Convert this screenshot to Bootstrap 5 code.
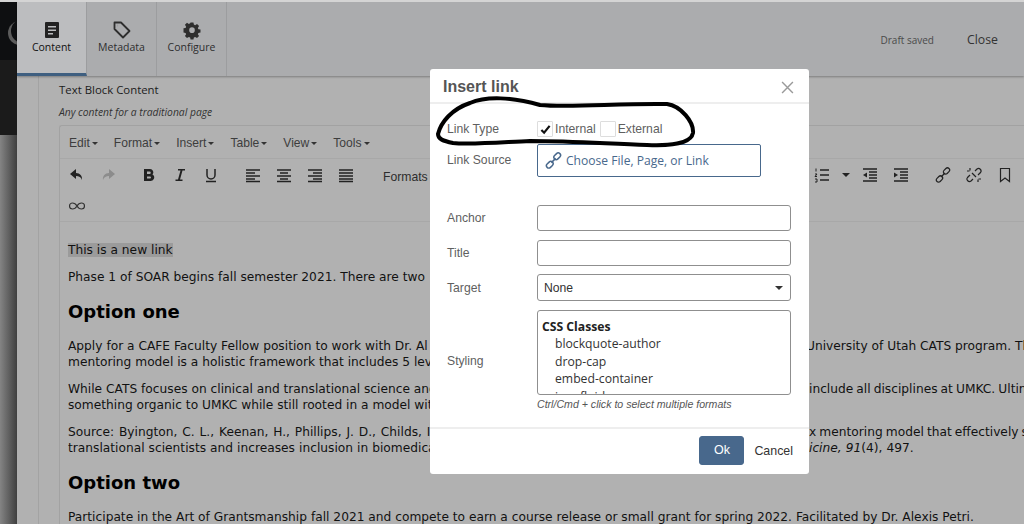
<!DOCTYPE html>
<html lang="en">
<head>
  <meta charset="UTF-8">
  <meta name="viewport" content="width=device-width, initial-scale=1.0">
  <title>Insert link</title>
  <link href="https://cdn.jsdelivr.net/npm/bootstrap@5.3.0/dist/css/bootstrap.min.css" rel="stylesheet">
  <style>
    html, body { height: 100%; }
    body { background: #b1b1b1; overflow: hidden; font-family: "Open Sans", sans-serif; color: #111; }
    .page-wrap { width: 1024px; height: 524px; border-top: 2px solid #d4d4d4; overflow: hidden; position: relative; }
    .side-strip { width: 17px; flex: none; background: linear-gradient(90deg, #848484, #3f3f3f); }
    .side-logo { height: 58px; background: #0e0f11; overflow: hidden; }
    .side-dark { height: 75px; background: #1b1b1b; }
    .main-pane { width: 1007px; flex: none; }
    .top-tabs { height: 74px; background: #abacae; box-shadow: 0 1px 2px rgba(0,0,0,.3); position: relative; }
    .tab-item { width: 70px; color: #2e2e2e; font-size: 10.5px; border-right: 1px solid #9c9d9f; padding-top: 18px; }
    .tab-item svg { display: block; margin: 0 auto; height: 20px; }
    .tab-on { background: #bcbdbf; border-bottom: 3px solid #3f5f80; color: #111; }
    .draft-note { font-size: 10px; color: #4a4a4a; margin: 3px 33px 0 0; }
    .close-link { font-size: 12.3px; color: #333; margin: 3px 26px 0 0; }
    .body-pane { padding-left: 21px; }
    .inner-pane { border-left: 1px solid #a3a3a3; padding: 6px 0 0 20px; }
    .field-name { font-size: 11.4px; line-height: 16px; color: #1c1c1c; }
    .field-help { font-size: 10.3px; font-style: italic; line-height: 14px; margin: 7px 0 6px; color: #333; }
    .editor-box { border: 1px solid #a2a2a2; border-right: 0; border-radius: 3px 0 0 0; }
    .menu-row { height: 33px; border-bottom: 1px solid #a8a8a8; padding: 1px 0 0 9px; gap: 16px; font: 12.1px "Liberation Sans", sans-serif; color: #3d3d3d; }
    .menu-row span::after, .formats-lbl::after { content: ""; display: inline-block; border: 3px solid transparent; border-top-color: #333; border-bottom: 0; margin-left: 2px; vertical-align: 2px; }
    .tool-rows { height: 63px; border-bottom: 1px solid #a8a8a8; position: relative; }
    .tool-row { height: 31px; padding-left: 1px; }
    .tool-btn { width: 31px; height: 31px; flex: none; }
    .tool-btn svg { width: 16px; height: 16px; }
    .tool-sep { width: 10px; flex: none; }
    .tool-sep-a { width: 11px; flex: none; }
    .tool-sep-b { width: 22px; flex: none; }
    .tool-sep-c { width: 11px; flex: none; }
    .num-caret { width: 17px; flex: none; }
    .formats-lbl { font: 12.2px "Liberation Sans", sans-serif; color: #2d2d2d; width: 423px; flex: none; padding-top: 5px; white-space: nowrap; overflow: hidden; }
    .edit-body { font: 12.22px/16px "DejaVu Sans", sans-serif; color: #111; padding: 20px 0 0 8px; white-space: nowrap; overflow: hidden; }
    .edit-body p { margin: 0 0 11px; }
    .edit-body h2 { font: bold 18px/22px "DejaVu Sans", sans-serif; margin: 16px 0 15px; color: #000; }
    .sel-text { background: #9b9b9b; }
    .split-line { display: flex; }
    .split-left { width: 741px; flex: none; overflow: hidden; }
    .nudge-back { margin-left: -3px; }
    .just-wide { word-spacing: 1px; }
    .just-some { word-spacing: .15px; }
    .just-tight { word-spacing: -.8px; }
    .insert-dlg { position: absolute; left: 430px; top: 67px; width: 379px; height: 405px; background: #fff; border-radius: 3px; font: 12.2px "Liberation Sans", sans-serif; color: #5f5f5f; }
    .dlg-head { height: 35px; border-bottom: 2px solid #eee; padding: 3px 15px 0 13px; }
    .dlg-title { font-size: 16px; font-weight: 700; color: #555; }
    .dlg-x { width: 13px; height: 13px; }
    .dlg-form { padding: 0 18px 0 17px; }
    .dlg-row { display: flex; align-items: center; }
    .dlg-gap { margin-bottom: 9px; }
    .type-row { height: 40px; padding-top: 10px; }
    .source-row { height: 61px; }
    .source-row .dlg-lbl { padding-top: 9px; }
    .dlg-lbl { width: 90px; flex: none; }
    .style-lbl { padding-top: 16px; }
    .dlg-input.form-control, .dlg-input.form-select { height: 26px; min-height: 0; padding: 0 6px; border: 1px solid #8f8f8f; border-radius: 3px; font: 12.2px "Liberation Sans", sans-serif; color: #333; }
    .dlg-input.form-select { height: 27px; background-image: url("data:image/svg+xml,%3csvg xmlns='http://www.w3.org/2000/svg' viewBox='0 0 8 4'%3e%3cpath d='M0 0h8L4 4z' fill='%23333'/%3e%3c/svg%3e"); background-size: 8px 4px; background-position: right 7px center; }
    .chk-box { width: 16px; height: 16px; border: 1px solid #ddd; border-radius: 1px; margin-right: 2px; flex: none; }
    .chk-next { margin-left: 4px; margin-right: 2px; }
    .src-btn { width: 224px; height: 33px; border: 1px solid #48688c; border-radius: 2px; color: #48688c; font: 12.1px "Open Sans", sans-serif; padding-left: 7px; background: #fff; }
    .style-box { height: 85px; width: 254px; border: 1px solid #8f8f8f; border-radius: 3px; overflow: hidden; font: 12.2px/17.4px "Open Sans", sans-serif; color: #333; padding: 7px 4px; }
    .style-box div { padding-left: 13px; }
    .style-box .style-head { font-weight: 700; padding-left: 0; color: #222; }
    .style-note { font-size: 10.6px; font-style: italic; margin: 2px 0 0 90px; line-height: 14px; color: #555; }
    .dlg-foot { position: absolute; left: 0; right: 0; bottom: 0; height: 47px; border-top: 2px solid #eee; padding: 0 16px 2px 0; }
    .ok-btn.btn { background: #48688c; border: 1px solid #48688c; color: #fff; width: 45px; height: 29px; padding: 0; font-size: 12.5px; border-radius: 3px; }
    .cancel-lnk { font-size: 12.4px; color: #333; margin-left: 10px; }
    .ink-mark { position: absolute; left: 0; top: 0; pointer-events: none; }
  </style>
</head>
<body>
  <div class="page-wrap d-flex">
    <div class="side-strip">
      <div class="side-logo"><svg width="17" height="58"><circle cx="20" cy="31" r="12" fill="#5c5c5c"/><circle cx="23" cy="29" r="12" fill="#0e0f11"/></svg></div>
      <div class="side-dark"></div>
    </div>
    <div class="main-pane">
      <div class="top-tabs d-flex align-items-center">
        <div class="tab-item tab-on h-100 text-center">
          <svg viewBox="0 0 16 20" width="16"><path fill="#222" fill-rule="evenodd" d="M2 2h12a1 1 0 0 1 1 1v14a1 1 0 0 1-1 1H2a1 1 0 0 1-1-1V3a1 1 0 0 1 1-1zM4 6v1.500h8V6zM4 9.500V11h8V9.500zM4 13v1.500h5V13z"/></svg>
          Content
        </div>
        <div class="tab-item h-100 text-center">
          <svg viewBox="0 0 20 20" width="20"><path fill="none" stroke="#2e2e2e" stroke-width="1.800" stroke-linejoin="round" d="M2.500 2.500h6.500l8.500 8.500-6.500 6.500L2.500 9zM5.500 5.500h.1"/></svg>
          Metadata
        </div>
        <div class="tab-item h-100 text-center">
          <svg viewBox="0 0 20 20" width="20"><path fill="#2e2e2e" fill-rule="evenodd" d="M8.300 1.500h3.400l.5 2.500 1.500.7 2.200-1.400 2.400 2.400-1.400 2.200.6 1.500 2.500.5v3.400l-2.500.5-.6 1.500 1.400 2.200-2.400 2.400-2.200-1.400-1.500.6-.5 2.400H8.300l-.5-2.400-1.500-.6-2.200 1.400-2.400-2.400 1.400-2.200-.7-1.500-2.400-.5V8.400l2.400-.5.7-1.500L1.700 4.200 4.100 1.800l2.200 1.400 1.500-.7zM10 7.200a3.300 3.300 0 1 0 0 6.600 3.300 3.300 0 0 0 0-6.600z" transform="translate(1.500 1.200) scale(.85)"/></svg>
          Configure
        </div>
        <span class="draft-note ms-auto">Draft saved</span>
        <span class="close-link">Close</span>
      </div>
      <div class="body-pane">
        <div class="inner-pane">
          <div class="field-name">Text Block Content</div>
          <div class="field-help">Any content for a traditional page</div>
          <div class="editor-box">
            <div class="menu-row d-flex align-items-center">
              <span>Edit</span><span>Format</span><span>Insert</span><span>Table</span><span>View</span><span>Tools</span>
            </div>
            <div class="tool-rows">
              <div class="tool-row d-flex align-items-center">
                <div class="tool-btn d-flex align-items-center justify-content-center"><svg viewBox="0 0 16 16"><path fill="#222" d="M7 2 1 7l6 5V9c3 0 5 1 6 4 .5-4-2-7-6-7z"/></svg></div>
                <div class="tool-btn d-flex align-items-center justify-content-center"><svg viewBox="0 0 16 16"><path fill="#8c8c8c" d="m9 2 6 5-6 5V9c-3 0-5 1-6 4-.5-4 2-7 6-7z"/></svg></div>
                <div class="tool-sep"></div>
                <div class="tool-btn d-flex align-items-center justify-content-center"><svg viewBox="0 0 16 16"><path fill="#222" fill-rule="evenodd" d="M3 2h6a3.300 3.300 0 0 1 2.500 5.500A3.500 3.500 0 0 1 9.500 14H3zm3 2.500V7h2.500a1.250 1.250 0 0 0 0-2.500zm0 5v2h3a1 1 0 0 0 0-2z"/></svg></div>
                <div class="tool-btn d-flex align-items-center justify-content-center"><svg viewBox="0 0 16 16"><path fill="#222" d="M6 2h7v1.500h-2.500L8 12.500h2.500V14h-7v-1.500H6l2.500-9H6z"/></svg></div>
                <div class="tool-btn d-flex align-items-center justify-content-center"><svg viewBox="0 0 16 16"><path fill="none" stroke="#222" stroke-width="1.500" d="M4 2v6a4 4 0 0 0 8 0V2M3 14.500h10"/></svg></div>
                <div class="tool-sep-a"></div>
                <div class="tool-btn d-flex align-items-center justify-content-center"><svg viewBox="0 0 16 16"><path stroke="#222" stroke-width="1.400" d="M1 3h14M1 6h9M1 9h14M1 12h9M1 14.500h14"/></svg></div>
                <div class="tool-btn d-flex align-items-center justify-content-center"><svg viewBox="0 0 16 16"><path stroke="#222" stroke-width="1.400" d="M1 3h14M4 6h8M1 9h14M4 12h8M1 14.500h14"/></svg></div>
                <div class="tool-btn d-flex align-items-center justify-content-center"><svg viewBox="0 0 16 16"><path stroke="#222" stroke-width="1.400" d="M1 3h14M6 6h9M1 9h14M6 12h9M1 14.500h14"/></svg></div>
                <div class="tool-btn d-flex align-items-center justify-content-center"><svg viewBox="0 0 16 16"><path stroke="#222" stroke-width="1.400" d="M1 3h14M1 6h14M1 9h14M1 12h14M1 14.500h14"/></svg></div>
                <div class="tool-sep-b"></div>
                <div class="formats-lbl">Formats</div>
                <div class="tool-btn d-flex align-items-center justify-content-center"><svg viewBox="0 0 16 16"><path stroke="#222" stroke-width="1.500" d="M6 3h9M6 8h9M6 13h9"/><path stroke="#222" fill="none" d="M2 1.500v3M1 7h2l-2 2.500h2M1 12h2v3H1"/></svg></div>
                <div class="num-caret d-flex align-items-center justify-content-center"><svg viewBox="0 0 8 4" width="8" height="4"><path fill="#222" d="M0 0h8L4 4z"/></svg></div>
                <div class="tool-btn d-flex align-items-center justify-content-center"><svg viewBox="0 0 16 16"><path stroke="#222" stroke-width="1.400" d="M1 2h14M7 5h8M7 8h8M7 11h8M1 14h14"/><path fill="#222" d="M5 5.500v5L1 8z"/></svg></div>
                <div class="tool-btn d-flex align-items-center justify-content-center"><svg viewBox="0 0 16 16"><path stroke="#222" stroke-width="1.400" d="M1 2h14M7 5h8M7 8h8M7 11h8M1 14h14"/><path fill="#222" d="M1 5.500v5L5 8z"/></svg></div>
                <div class="tool-sep-c"></div>
                <div class="tool-btn d-flex align-items-center justify-content-center"><svg viewBox="0 0 16 16"><g fill="none" stroke="#222" stroke-width="1.200"><rect x="8" y="1.800" width="7" height="4.400" rx="2.200" transform="rotate(-45 11.500 4)"/><rect x="1" y="9.800" width="7" height="4.400" rx="2.200" transform="rotate(-45 4.500 12)"/><path d="m6 10 4-4"/></g></svg></div>
                <div class="tool-btn d-flex align-items-center justify-content-center"><svg viewBox="0 0 16 16"><g fill="none" stroke="#222" stroke-width="1.200"><path d="M9 4l2-2a2.500 2.500 0 0 1 3.500 3.500L12 8M7 12l-2 2a2.500 2.500 0 0 1-3.500-3.500L4 8M6 6l4 4"/><path d="M4 1v2.500M1 4h2.500M12 15v-2.500M15 12h-2.500"/></g></svg></div>
                <div class="tool-btn d-flex align-items-center justify-content-center"><svg viewBox="0 0 16 16"><path fill="none" stroke="#222" stroke-width="1.200" d="M3.500 1.500h9v13L8 11l-4.500 3.500z"/></svg></div>
              </div>
              <div class="tool-row d-flex align-items-center">
                <div class="tool-btn d-flex align-items-center justify-content-center"><svg viewBox="0 0 16 16"><path fill="none" stroke="#333" stroke-width="1.200" d="M8 8C6.500 5.500 5 5 3.500 5a3 3 0 0 0 0 6C5 11 6.500 10.500 8 8s3-3 4.500-3a3 3 0 0 1 0 6C11 11 9.500 10.500 8 8z"/></svg></div>
              </div>
            </div>
            <div class="edit-body">
              <p><span class="sel-text">This is a new link</span></p>
              <p>Phase 1 of SOAR begins fall semester 2021. There are two</p>
              <h2>Option one</h2>
              <p>
                <span class="split-line"><span class="split-left">Apply for a CAFE Faculty Fellow position to work with Dr. Al</span><span class="nudge-back">University of Utah CATS program. Th</span></span>
                <span class="split-line">mentoring model is a holistic framework that includes 5 lev</span>
              </p>
              <p>
                <span class="split-line"><span class="split-left">While CATS focuses on clinical and translational science and</span><span class="just-tight">include all disciplines at UMKC. Ultin</span></span>
                <span class="split-line">something organic to UMKC while still rooted in a model wit</span>
              </p>
              <p>
                <span class="split-line"><span class="split-left just-wide">Source: Byington, C. L., Keenan, H., Phillips, J. D., Childs, I</span><span class="just-tight">x mentoring model that effectively s</span></span>
                <span class="split-line just-some"><span class="split-left">translational scientists and increases inclusion in biomedica</span><span><em>icine, 91</em>(4), 497.</span></span>
              </p>
              <h2>Option two</h2>
              <p>Participate in the Art of Grantsmanship fall 2021 and compete to earn a course release or small grant for spring 2022. Facilitated by Dr. Alexis Petri.</p>
            </div>
          </div>
        </div>
      </div>
    </div>

    <div class="insert-dlg">
      <div class="dlg-head d-flex align-items-center justify-content-between">
        <span class="dlg-title">Insert link</span>
        <svg class="dlg-x" viewBox="0 0 12 12"><path stroke="#9a9a9a" stroke-width="1.300" d="m1 1 10 10M11 1 1 11"/></svg>
      </div>
      <div class="dlg-form">
        <div class="dlg-row type-row">
          <span class="dlg-lbl">Link Type</span>
          <span class="chk-box d-flex align-items-center justify-content-center"><svg viewBox="0 0 12 12" width="11" height="11"><path fill="none" stroke="#111" stroke-width="2.400" d="m1.500 6.500 3 3 6-7.500"/></svg></span>
          <span>Internal</span>
          <span class="chk-box chk-next"></span>
          <span>External</span>
        </div>
        <div class="dlg-row source-row align-items-start">
          <span class="dlg-lbl">Link Source</span>
          <div class="src-btn d-flex align-items-center gap-1">
            <svg viewBox="0 0 16 16" width="17" height="17"><g fill="none" stroke="#48688c" stroke-width="1.400"><rect x="8" y="1.800" width="7" height="4.400" rx="2.200" transform="rotate(-45 11.500 4)"/><rect x="1" y="9.800" width="7" height="4.400" rx="2.200" transform="rotate(-45 4.500 12)"/><path d="m6 10 4-4"/></g></svg>
            Choose File, Page, or Link
          </div>
        </div>
        <div class="dlg-row dlg-gap"><span class="dlg-lbl">Anchor</span><input class="form-control dlg-input" type="text"></div>
        <div class="dlg-row mb-2"><span class="dlg-lbl">Title</span><input class="form-control dlg-input" type="text"></div>
        <div class="dlg-row dlg-gap"><span class="dlg-lbl">Target</span><select class="form-select dlg-input"><option>None</option></select></div>
        <div class="dlg-row">
          <span class="dlg-lbl style-lbl">Styling</span>
          <div class="style-box">
            <div class="style-head">CSS Classes</div>
            <div>blockquote-author</div>
            <div>drop-cap</div>
            <div>embed-container</div>
            <div>img-fluid</div>
          </div>
        </div>
        <div class="style-note">Ctrl/Cmd + click to select multiple formats</div>
      </div>
      <div class="dlg-foot d-flex align-items-center justify-content-end">
        <button class="btn ok-btn" type="button">Ok</button>
        <span class="cancel-lnk">Cancel</span>
      </div>
      <svg class="ink-mark" width="379" height="100" viewBox="430 69 379 100"><path fill="none" stroke="#000" stroke-width="4" stroke-linecap="round" d="M438 134C441 122 452 109 470 103C486 96 512 97 540 105C570 108 620 103 667 104C681 106 694 122 693 133C691 144 668 146 647 145C610 144 575 141 530 141C505 142 470 145 453 143C443 141 438 139 438 134Z"/></svg>
    </div>
  </div>
  <script src="https://cdn.jsdelivr.net/npm/bootstrap@5.3.0/dist/js/bootstrap.bundle.min.js"></script>
</body>
</html>
